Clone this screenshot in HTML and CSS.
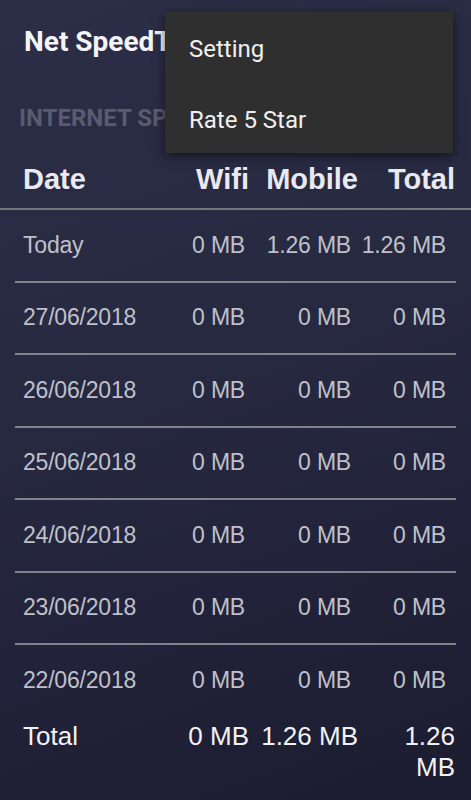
FILE: index.html
```html
<!DOCTYPE html>
<html>
<head>
    <meta charset="utf-8">
    <meta name="viewport" content="width=device-width, initial-scale=1.0">
    <title>Net SpeedTest</title>
    <link rel="stylesheet" href="styles.css">
</head>
<body>
    <div class="screen">
        <!--toolbar-->
        <header class="app-bar">
            <h1 class="app-title">Net SpeedTest</h1>
        </header>
        <div class="section-title">INTERNET SPEED</div>

        <!--table head-->
        <div class="usage-head">
            <span class="cell-date">Date</span>
            <span class="cell-num">Wifi</span>
            <span class="cell-num">Mobile</span>
            <span class="cell-num">Total</span>
        </div>

        <!--daily usage-->
        <ul class="usage-list">
            <li class="usage-row">
                <span class="cell-date">Today</span>
                <span class="cell-num">0 MB</span>
                <span class="cell-num">1.26 MB</span>
                <span class="cell-num">1.26 MB</span>
            </li>
            <li class="usage-row">
                <span class="cell-date">27/06/2018</span>
                <span class="cell-num">0 MB</span>
                <span class="cell-num">0 MB</span>
                <span class="cell-num">0 MB</span>
            </li>
            <li class="usage-row">
                <span class="cell-date">26/06/2018</span>
                <span class="cell-num">0 MB</span>
                <span class="cell-num">0 MB</span>
                <span class="cell-num">0 MB</span>
            </li>
            <li class="usage-row">
                <span class="cell-date">25/06/2018</span>
                <span class="cell-num">0 MB</span>
                <span class="cell-num">0 MB</span>
                <span class="cell-num">0 MB</span>
            </li>
            <li class="usage-row">
                <span class="cell-date">24/06/2018</span>
                <span class="cell-num">0 MB</span>
                <span class="cell-num">0 MB</span>
                <span class="cell-num">0 MB</span>
            </li>
            <li class="usage-row">
                <span class="cell-date">23/06/2018</span>
                <span class="cell-num">0 MB</span>
                <span class="cell-num">0 MB</span>
                <span class="cell-num">0 MB</span>
            </li>
            <li class="usage-row">
                <span class="cell-date">22/06/2018</span>
                <span class="cell-num">0 MB</span>
                <span class="cell-num">0 MB</span>
                <span class="cell-num">0 MB</span>
            </li>
        </ul>

        <!--sum-->
        <div class="usage-total">
            <span class="cell-date">Total</span>
            <span class="cell-num">0 MB</span>
            <span class="cell-num">1.26 MB</span>
            <span class="cell-num">1.26 MB</span>
        </div>

        <!--overflow menu-->
        <div class="overflow-menu">
            <div class="menu-item">Setting</div>
            <div class="menu-item">Rate 5 Star</div>
        </div>
    </div>
</body>
</html>
```

FILE: styles.css
```css
body {
    margin: 0;
    background-color: #1d1e31;
}
.screen {
    position: relative;
    width: 471px;
    height: 800px;
    overflow: hidden;
    background: linear-gradient(160deg, #2c2e47 0%, #272941 45%, #22233a 70%, #1b1c2f 100%);
    font-family: "Liberation Sans", Arial, sans-serif;
    color: #ececf0;
}
.app-bar {
    height: 84px;
    padding-left: 24px;
}
/* the open menu covers the rest of the title */
.app-title {
    width: 141px;
    margin: 0;
    overflow: hidden;
    font-family: Roboto, "Liberation Sans", sans-serif;
    font-size: 28px;
    font-weight: bold;
    line-height: 84px;
    color: #f4f4f6;
    white-space: nowrap;
}
.section-title {
    width: 146px;
    margin-top: 20px;
    margin-left: 19px;
    overflow: hidden;
    font-family: Roboto, "Liberation Sans", sans-serif;
    font-size: 24px;
    font-weight: bold;
    line-height: 28px;
    color: #595b70;
    white-space: nowrap;
}
.usage-head,
.usage-total {
    display: grid;
    grid-template-columns: 1fr 70px 102px 90px;
    column-gap: 7px;
    padding: 0 16px 0 23px;
}
.usage-head {
    padding-top: 30px;
    padding-bottom: 12px;
    font-size: 29px;
    font-weight: bold;
    line-height: 34px;
    color: #e9e9ee;
    border-bottom: 2px solid #76767e;
}
.usage-list {
    list-style: none;
    margin: 0 15px;
    padding: 0;
}
.usage-row {
    display: grid;
    grid-template-columns: 1fr 70px 99px 88px;
    column-gap: 7px;
    align-items: center;
    height: 70.5px;
    padding: 0 10px 0 8px;
    font-size: 23px;
    letter-spacing: -0.2px;
    color: #bfc0c9;
    border-bottom: 2px solid #828289;
}
.usage-row:last-child {
    border-bottom: none;
}
.usage-total {
    padding-top: 5px;
    font-size: 26px;
    line-height: 31px;
    color: #f2f2f4;
}
.cell-num {
    text-align: right;
}
.overflow-menu {
    position: absolute;
    top: 12px;
    left: 165px;
    width: 288px;
    background-color: #2f2f2f;
    box-shadow: 0 3px 10px rgba(0, 0, 0, 0.55);
}
.menu-item {
    height: 70.5px;
    line-height: 74px;
    padding-left: 24px;
    font-family: Roboto, "Liberation Sans", sans-serif;
    font-size: 24px;
    color: #f0f0f0;
}
```
